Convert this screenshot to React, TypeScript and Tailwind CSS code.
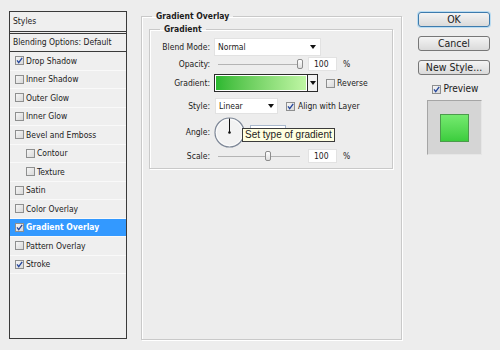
import type { ReactNode } from "react";

const styleRows = [
  { label: "Drop Shadow", on: true },
  { label: "Inner Shadow" },
  { label: "Outer Glow" },
  { label: "Inner Glow" },
  { label: "Bevel and Emboss" },
  { label: "Contour", indent: true },
  { label: "Texture", indent: true },
  { label: "Satin" },
  { label: "Color Overlay" },
  { label: "Gradient Overlay", on: true, active: true },
  { label: "Pattern Overlay" },
  { label: "Stroke", on: true },
];

function Check({ on }: { on?: boolean }) {
  return (
    <span className="flex h-[9px] w-[9px] shrink-0 items-center justify-center border border-[#8e8f8f] bg-linear-to-br from-[#f6f6f6] to-[#d9d9d9]">
      {on && (
        <svg width="7" height="7" viewBox="0 0 7 7">
          <path d="M1 3.4 L2.7 5.6 L6.2 0.8" fill="none" stroke="#24469c" strokeWidth="1.3" />
        </svg>
      )}
    </span>
  );
}

function Arrow() {
  return (
    <svg width="6" height="4" viewBox="0 0 6 4">
      <path d="M0 0 H6 L3 4 Z" fill="#111" />
    </svg>
  );
}

function Row({ label, className, children }: { label: string; className: string; children: ReactNode }) {
  return (
    <div className={`flex items-center gap-[4px] ${className}`}>
      <span className="w-[60px] text-right">{label}</span>
      {children}
    </div>
  );
}

function Slider({ thumb }: { thumb: string }) {
  return (
    <div className="relative h-full w-[90px] shrink-0">
      <div className="absolute left-[4px] right-[4px] top-1/2 h-px bg-[#b4b4b4]" />
      <div className={`absolute top-[2px] h-[10px] w-[6px] rounded-[2px] border border-[#8c8c8c] bg-linear-to-b from-white to-[#dedede] ${thumb}`} />
    </div>
  );
}

function Btn({ children, focus }: { children: ReactNode; focus?: boolean }) {
  return (
    <div
      className={`flex h-[15px] w-[72px] items-center justify-center rounded-[3px] border bg-linear-to-b from-[#f4f4f4] to-[#dadada] text-[10.5px] ${
        focus ? "border-[#3d7bad] shadow-[0_0_0_1px_#b9dcf2]" : "border-[#777]"
      }`}
    >
      {children}
    </div>
  );
}

export default function App() {
  return (
    <div className="flex h-[350px] w-[500px] bg-[#ededed] font-['DejaVu_Sans_Condensed','DejaVu_Sans',sans-serif] text-[8.5px] leading-none text-[#1b1b1b]">
      {/* Styles list */}
      <aside className="ml-[9px] mt-[11px] flex h-[328px] w-[118px] shrink-0 flex-col border border-[#3a3a3a] bg-[#efefef]">
        <div className="flex h-[20px] items-center border-b border-[#3a3a3a] pl-[3px]">Styles</div>
        <div className="mt-[1px] flex h-[19px] items-center border-b border-t border-[#3a3a3a] pl-[3px]">Blending Options: Default</div>
        {styleRows.map((r) => (
          <div
            key={r.label}
            className={`flex h-[18.5px] items-center gap-[2px] border-b border-[#f9f9f9] ${r.indent ? "pl-[16px]" : "pl-[5px]"} ${
              r.active ? "bg-[#3399ff] font-bold text-white" : ""
            }`}
          >
            <Check on={r.on} />
            <span>{r.label}</span>
          </div>
        ))}
      </aside>

      {/* Gradient Overlay */}
      <fieldset className="ml-[14px] mt-[10px] h-[330px] w-[261px] shrink-0 border border-[#c9c9c9] shadow-[1px_1px_0_#fff,inset_1px_1px_0_#fff]">
        <legend className="ml-[10px] px-[4px] font-bold leading-[12px]">Gradient Overlay</legend>
        <fieldset className="ml-[7px] mt-[1px] w-[244px] border border-[#c9c9c9] pb-[5px] pt-[3px] shadow-[1px_1px_0_#fff,inset_1px_1px_0_#fff]">
          <legend className="ml-[10px] px-[4px] font-bold leading-[12px]">Gradient</legend>

          <Row label="Blend Mode:" className="h-[18px]">
            <div className="flex h-full w-[107px] items-center justify-between border border-[#e2e2e2] bg-white pl-[3px] pr-[4px]">
              <span>Normal</span>
              <Arrow />
            </div>
          </Row>

          <Row label="Opacity:" className="mt-[1px] h-[14px]">
            <Slider thumb="left-[83px]" />
            <div className="flex h-full w-[29px] items-center border border-[#e2e2e2] bg-white pl-[5px]">100</div>
            <span className="ml-[2px]">%</span>
          </Row>

          <Row label="Gradient:" className="mt-[3px] h-[18px]">
            <div className="flex h-full w-[104px] border border-[#2a2a2a]">
              <div className="h-full flex-1 border border-white bg-linear-to-r from-[#29b82f] to-[#bff6a4]" />
              <div className="flex w-[10px] items-center justify-center border-l border-[#2a2a2a] bg-[#f2f2f2]">
                <Arrow />
              </div>
            </div>
            <div className="ml-[4px] flex items-center gap-[2px]">
              <Check />
              <span>Reverse</span>
            </div>
          </Row>

          <Row label="Style:" className="mt-[6px] h-[16px]">
            <div className="ml-[1px] flex h-full w-[63px] items-center justify-between border border-[#e2e2e2] bg-white pl-[3px] pr-[3px]">
              <span>Linear</span>
              <Arrow />
            </div>
            <div className="ml-[4px] flex items-center gap-[3px]">
              <Check on />
              <span>Align with Layer</span>
            </div>
          </Row>

          <Row label="Angle:" className="relative mt-[3px] h-[30px]">
            <svg width="31" height="31" viewBox="0 0 31 31" className="shrink-0">
              <circle cx="15.5" cy="15.5" r="14.5" fill="#f2f2f2" stroke="#7d8797" strokeWidth="1.2" />
              <circle cx="15.5" cy="15.5" r="13.2" fill="none" stroke="#fff" strokeWidth="0.8" />
              <line x1="15.5" y1="15.5" x2="15.5" y2="1.5" stroke="#111" strokeWidth="1" />
              <circle cx="15.5" cy="15.5" r="1.3" fill="#111" />
            </svg>
            <div className="ml-[1px] h-[15px] w-[36px] border border-[#a9b8cc] bg-white" />
            <div className="absolute left-[92px] top-[11px] flex h-[14px] items-center whitespace-nowrap border border-[#3b3b3b] bg-[#ffffe1] px-[2px] font-['Liberation_Sans',sans-serif] text-[10px]">
              Set type of gradient
            </div>
          </Row>

          <Row label="Scale:" className="mt-[2px] h-[14px]">
            <Slider thumb="left-[51px]" />
            <div className="flex h-full w-[29px] items-center border border-[#e2e2e2] bg-white pl-[5px]">100</div>
            <span className="ml-[2px]">%</span>
          </Row>
        </fieldset>
      </fieldset>

      {/* Buttons */}
      <div className="ml-[16px] mt-[12px] flex w-[72px] shrink-0 flex-col items-center">
        <Btn focus>OK</Btn>
        <div className="mt-[9px]">
          <Btn>Cancel</Btn>
        </div>
        <div className="mt-[9px]">
          <Btn>New Style...</Btn>
        </div>
        <div className="mt-[9px] flex items-center gap-[3px] pl-[2px] text-[10px]">
          <Check on />
          <span>Preview</span>
        </div>
        <div className="mt-[6px] flex h-[55px] w-[55px] items-center justify-center border-b border-l border-r border-t border-[#a5a5a5] border-b-[#e6e6e6] border-r-[#e6e6e6] bg-[#d5d5d5]">
          <div className="h-[28px] w-[29px] border border-[#4c9b4c] bg-linear-to-b from-[#74ea6f] to-[#3bcd3d]" />
        </div>
      </div>
    </div>
  );
}
